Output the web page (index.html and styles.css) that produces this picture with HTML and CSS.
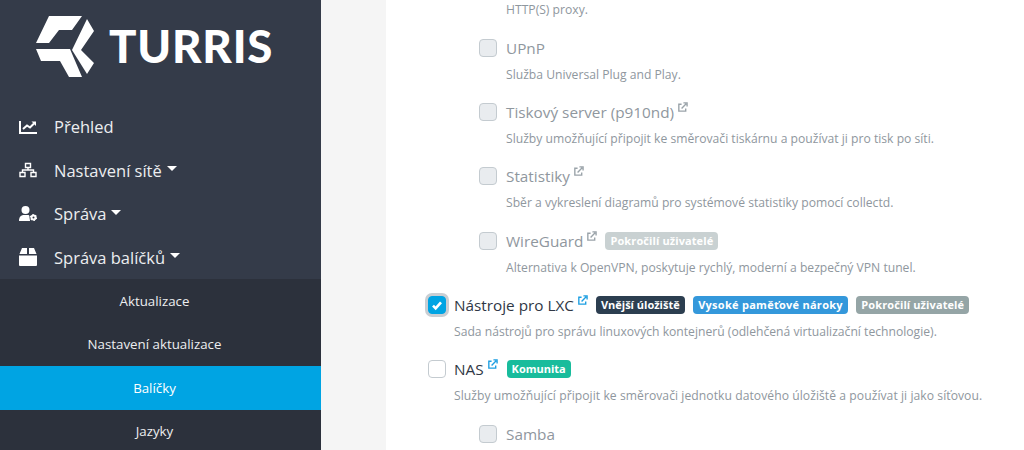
FILE: index.html
```html
<!DOCTYPE html>
<html lang="cs">
<head>
<meta charset="utf-8">
<title>Turris</title>
<link rel="stylesheet" href="styles.css">
</head>
<body>
<div class="page">
  <nav class="sidebar">
    <div class="brand">
      <svg class="logo" viewBox="0 0 60 62"><path d="M14 0H47L37 14H24L14 27H1Z"/><path d="M1 33H35L47 61H34L25 45H6Z"/><path d="M52 3L59 15L46 34L59 47L52 58L37 34Z"/></svg>
      <span class="brand-name">TURRIS</span>
    </div>
    <ul class="menu">
      <li class="item"><svg class="ico" viewBox="0 0 18 18"><path d="M1 3V15H18" class="ln"/><path d="M4 11L8 7.500L11 9.500L15 5.500" class="ln"/><path d="M12.500 3.500H17V8Z"/></svg>Přehled</li>
      <li class="item"><svg class="ico" viewBox="0 0 18 18"><path d="M6.500 2.500h5v4h-5zM1 11.500h5v4H1zM12 11.500h5v4h-5z" class="ln thin"/><path d="M3.500 11.500V9h11v2.500M9 6.500V9" class="ln thin"/></svg>Nastavení sítě<i class="caret"></i></li>
      <li class="item"><svg class="ico" viewBox="0 0 18 18"><circle cx="6.500" cy="5" r="4"/><path d="M0 16c0-4 2-6 5-6h4c1 0 1.500.5 1.500 2s.5 2.500.5 4Z"/><circle cx="14.500" cy="12.500" r="2" class="ln thick"/><circle cx="14.500" cy="12.500" r="3" class="ln teeth"/></svg>Správa<i class="caret"></i></li>
      <li class="item"><svg class="ico" viewBox="0 0 18 18"><path d="M3 0H8V6H0.500ZM10 0H15L17.500 6H10ZM0 7.500H18V17a1 1 0 0 1-1 1H1a1 1 0 0 1-1-1Z"/></svg>Správa balíčků<i class="caret"></i></li>
    </ul>
    <ul class="submenu">
      <li class="sub">Aktualizace</li>
      <li class="sub">Nastavení aktualizace</li>
      <li class="sub active">Balíčky</li>
      <li class="sub">Jazyky</li>
    </ul>
  </nav>
  <div class="gutter"></div>
  <main class="main">
    <section class="pkg child clipped">
      <p class="desc">HTTP(S) proxy.</p>
    </section>
    <section class="pkg child">
      <div class="head"><span class="box"></span><span class="name">UPnP</span></div>
      <p class="desc">Služba Universal Plug and Play.</p>
    </section>
    <section class="pkg child">
      <div class="head"><span class="box"></span><span class="name">Tiskový server (p910nd)</span><svg class="ext" viewBox="0 0 12 12"><path d="M5 2.500H2V10H9.500V7" class="s"/><path d="M5 7L10 2M7 1H11V5" class="s"/></svg></div>
      <p class="desc">Služby umožňující připojit ke směrovači tiskárnu a používat ji pro tisk po síti.</p>
    </section>
    <section class="pkg child">
      <div class="head"><span class="box"></span><span class="name">Statistiky</span><svg class="ext" viewBox="0 0 12 12"><path d="M5 2.500H2V10H9.500V7" class="s"/><path d="M5 7L10 2M7 1H11V5" class="s"/></svg></div>
      <p class="desc">Sběr a vykreslení diagramů pro systémové statistiky pomocí collectd.</p>
    </section>
    <section class="pkg child">
      <div class="head"><span class="box"></span><span class="name">WireGuard</span><svg class="ext" viewBox="0 0 12 12"><path d="M5 2.500H2V10H9.500V7" class="s"/><path d="M5 7L10 2M7 1H11V5" class="s"/></svg><span class="tag gray faded">Pokročilí uživatelé</span></div>
      <p class="desc">Alternativa k OpenVPN, poskytuje rychlý, moderní a bezpečný VPN tunel.</p>
    </section>
    <section class="pkg">
      <div class="head"><span class="box checked"><svg viewBox="0 0 12 12"><path d="M3 6.500L5 8.500L9 4"/></svg></span><span class="name">Nástroje pro LXC</span><svg class="ext on" viewBox="0 0 12 12"><path d="M5 2.500H2V10H9.500V7" class="s"/><path d="M5 7L10 2M7 1H11V5" class="s"/></svg><span class="tag navy">Vnější úložiště</span><span class="tag blue">Vysoké paměťové nároky</span><span class="tag gray">Pokročilí uživatelé</span></div>
      <p class="desc">Sada nástrojů pro správu linuxových kontejnerů (odlehčená virtualizační technologie).</p>
    </section>
    <section class="pkg">
      <div class="head"><span class="box open"></span><span class="name">NAS</span><svg class="ext on" viewBox="0 0 12 12"><path d="M5 2.500H2V10H9.500V7" class="s"/><path d="M5 7L10 2M7 1H11V5" class="s"/></svg><span class="tag green">Komunita</span></div>
      <p class="desc wide">Služby umožňující připojit ke směrovači jednotku datového úložiště a používat ji jako síťovou.</p>
    </section>
    <section class="pkg child">
      <div class="head"><span class="box"></span><span class="name">Samba</span></div>
    </section>
  </main>
</div>
</body>
</html>
```
FILE: styles.css
```css
* { box-sizing: border-box; }
html, body { margin: 0; height: 100%; overflow: hidden; }
body { font-family: "Open Sans", "Noto Sans", sans-serif; background: #fff; }
ul { list-style: none; margin: 0; padding: 0; }
p { margin: 0; }

.page { display: flex; height: 450px; overflow: hidden; }

.sidebar { width: 321px; flex: none; background: #343b49; color: #f2f3f5; display: flex; flex-direction: column; overflow: hidden; }
.brand { height: 105px; flex: none; display: flex; align-items: flex-start; padding: 16px 0 0 35px; gap: 14px; }
.logo { width: 60px; height: 62px; fill: #fff; flex: none; }
.brand-name { font: 900 45.500px/1 "Lato", sans-serif; color: #fff; letter-spacing: 0.800px; margin-top: 7px; }

.menu { flex: none; }
.item { height: 43.500px; display: flex; align-items: center; padding-left: 19px; font-size: 16.500px; color: #eceef0; }
.ico { width: 18px; height: 18px; margin-right: 17px; fill: #fff; flex: none; }
.ln { fill: none; stroke: #fff; stroke-width: 2; }
.thin { stroke-width: 1.400; }
.thick { stroke-width: 2; }
.teeth { stroke-width: 1.200; stroke-dasharray: 1.500 1.640; }
.caret { width: 0; height: 0; margin-left: 5px; margin-bottom: 3px; border: 5px solid transparent; border-top-color: #fff; border-bottom-width: 0; }

.submenu { background: #2c313c; flex: 1 0 auto; padding-right: 12px; }
.sub { height: 43.500px; display: flex; align-items: center; justify-content: center; font-size: 13.300px; color: #eceef0; }
.active { background: #00a4e3; color: #fff; margin-right: -12px; padding-right: 12px; }

.gutter { width: 65px; flex: none; background: #f5f5f5; }

.main { flex: 1; min-width: 0; padding: 0 0 0 42px; background: #fff; }
.pkg { height: 64.400px; }
.child { padding-left: 51px; }
.clipped { height: 34.500px; }
.head { display: flex; align-items: center; height: 26px; margin-bottom: 4px; }
.box { width: 18px; height: 18px; flex: none; margin-right: 9px; border: 1px solid #c4cbd0; border-radius: 4px; background: #e9ecef; }
.box.open { background: #fff; margin-right: 8px; }
.box.checked { background: #00a4e3; border-color: #00a4e3; box-shadow: 0 0 0 3px #c9ced3; display: flex; margin-right: 8px; }
.box.checked svg { width: 100%; height: 100%; fill: none; stroke: #fff; stroke-width: 2; }
.name { font-size: 15.300px; color: #2f3745; }
.child .name { color: #8f979e; }
.ext { width: 11px; height: 11px; margin: -9px 9px 0 3px; flex: none; }
.s { fill: none; stroke: #9aa3a9; stroke-width: 1.500; }
.ext.on .s { stroke: #1d9fe2; }
.tag { font-size: 11px; font-weight: 700; color: #fff; border-radius: 4px; padding: 0 5px; line-height: 18px; margin-right: 8.500px; }
.navy { background: #2c3e50; margin-left: -1px; }
.blue { background: #3498db; letter-spacing: 0.270px; }
.gray { background: #95a5a6; letter-spacing: 0.100px; }
.green { background: #18bc9c; }
.faded { opacity: 0.500; margin-left: -1px; }
.desc { font-size: 12.150px; line-height: 20px; color: #8f979e; padding-left: 26px; }
.desc.wide { letter-spacing: 0.050px; }
.child .desc { padding-left: 27px; }
```
